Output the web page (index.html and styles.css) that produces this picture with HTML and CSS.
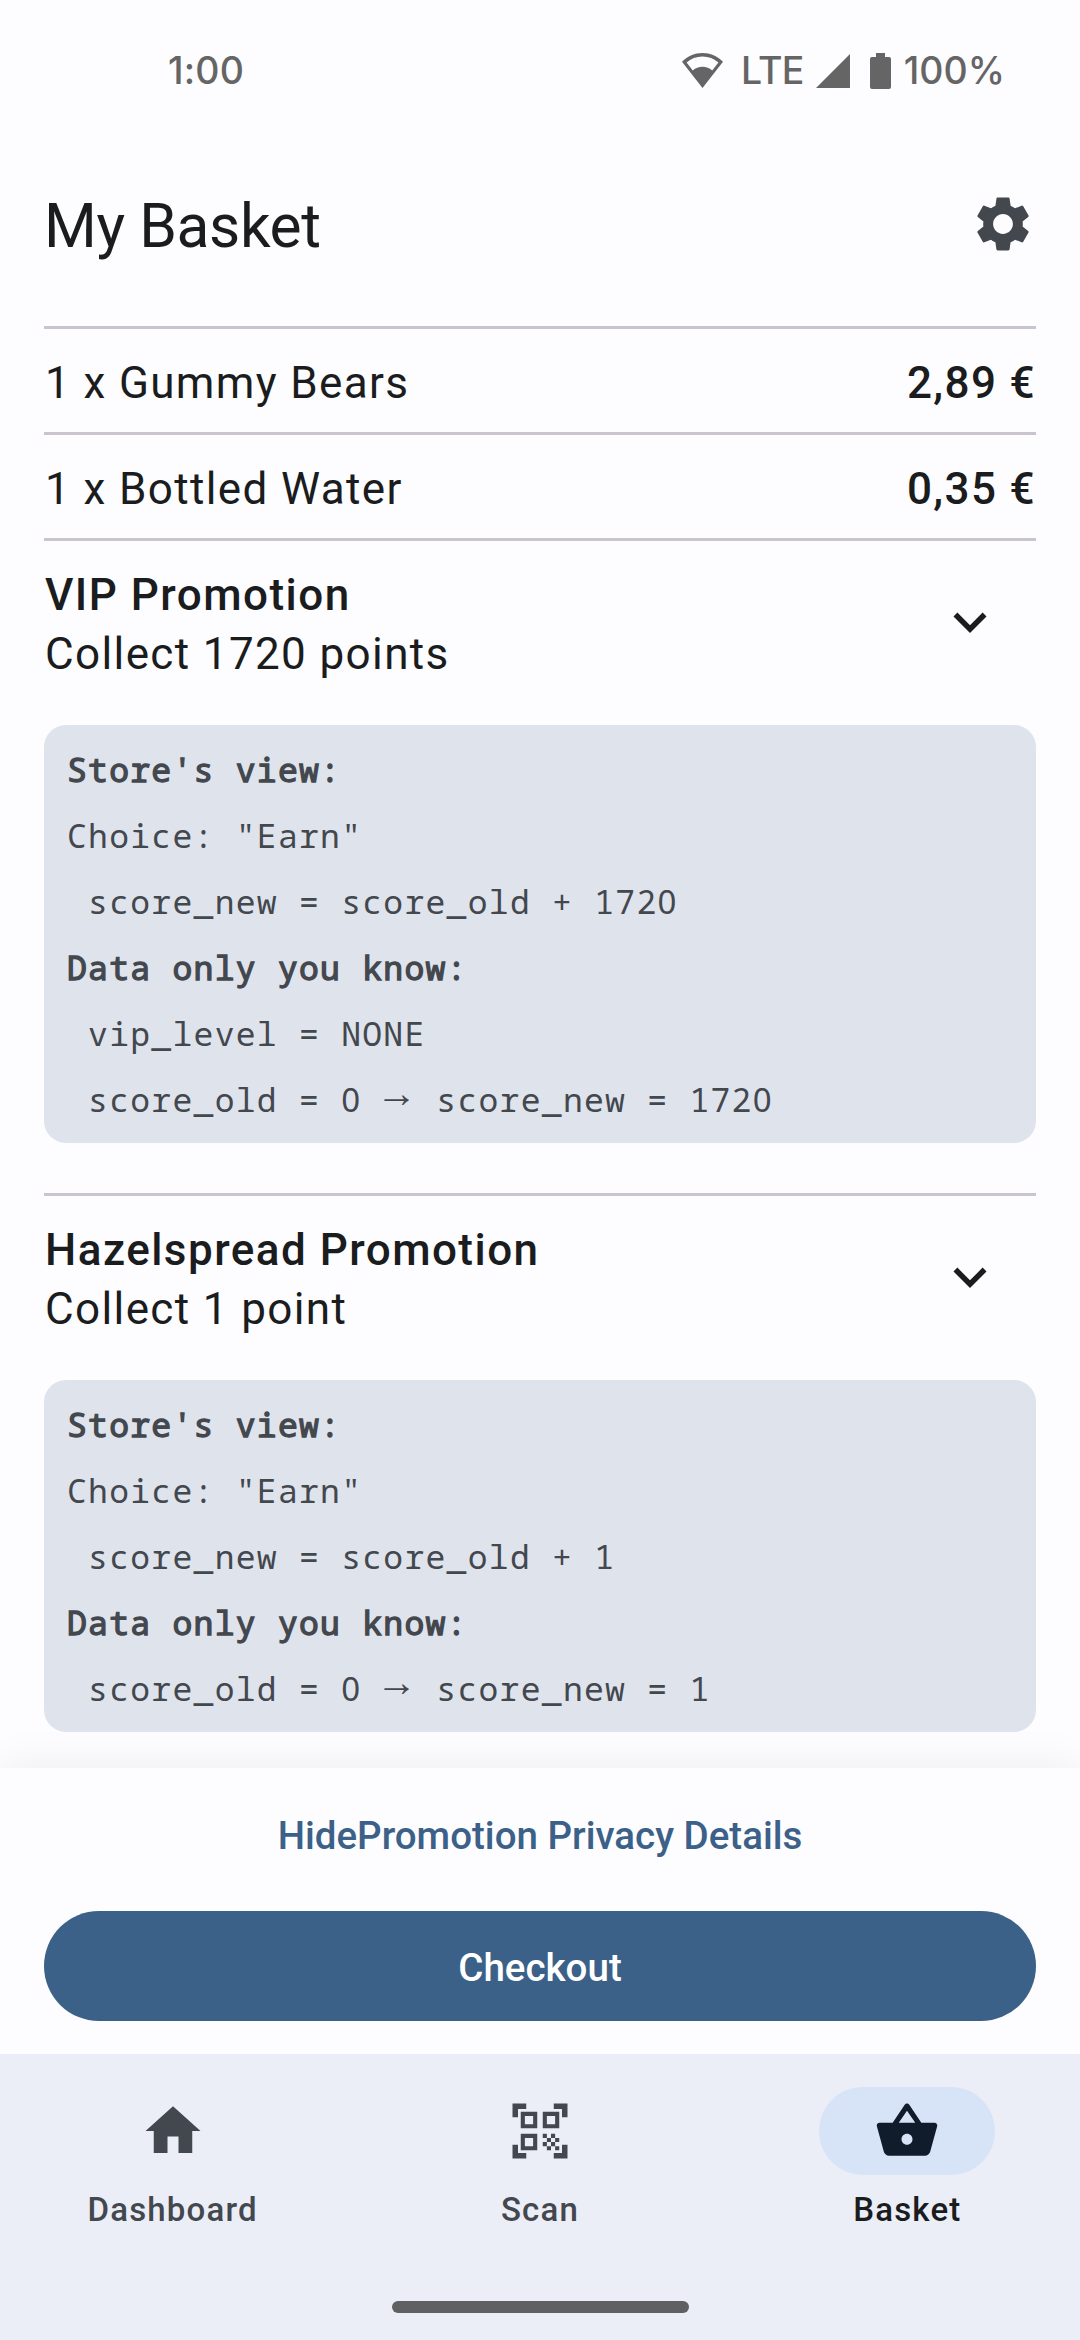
FILE: index.html
```html
<!DOCTYPE html>
<html lang="en">
<head>
<meta charset="utf-8">
<title>My Basket</title>
<link rel="stylesheet" href="styles.css">
</head>
<body>
<div class="screen">
  <div class="status-bar">
    <span class="clock">1:00</span>
    <div class="status-icons">
      <svg class="wifi" viewBox="0 0 41 35"><path fill-rule="evenodd" d="M20.500 0C12.700 0 5.600 3.200 0 8.700L20.500 35L41 8.700C35.400 3.200 28.300 0 20.500 0zM20.500 3.600C26.600 3.600 32.100 5.700 36.400 9.500L30.200 17.500C27.500 15.100 24.200 13.800 20.500 13.800S13.500 15.100 10.800 17.500L4.600 9.500C8.900 5.700 14.400 3.600 20.500 3.600z"/></svg>
      <span class="network">LTE</span>
      <svg class="signal" viewBox="0 0 34 34"><path d="M34 0V34H0z"/></svg>
      <svg class="battery" viewBox="0 0 21 36"><path d="M6 0H15V4H19A2 2 0 0 1 21 6V34A2 2 0 0 1 19 36H2A2 2 0 0 1 0 34V6A2 2 0 0 1 2 4H6z"/></svg>
      <span class="charge">100%</span>
    </div>
  </div>
  <header class="app-bar">
    <h1 class="title">My Basket</h1>
    <svg class="icon settings" viewBox="0 0 24 24"><path d="M19.14 12.94c.04-.3.06-.61.06-.94 0-.32-.02-.64-.07-.94l2.030-1.580c.18-.14.23-.41.12-.61l-1.920-3.320c-.12-.22-.37-.29-.59-.22l-2.390.96c-.5-.38-1.030-.7-1.620-.94l-.36-2.540c-.04-.24-.24-.41-.48-.41h-3.840c-.24 0-.43.17-.47.41l-.36 2.540c-.59.24-1.130.57-1.620.94l-2.390-.96c-.22-.08-.47 0-.59.22L2.740 8.870c-.12.21-.08.47.12.61l2.030 1.580c-.05.3-.09.63-.09.94s.02.64.07.94l-2.030 1.580c-.18.14-.23.41-.12.61l1.920 3.320c.12.22.37.29.59.22l2.390-.96c.5.38 1.030.7 1.620.94l.36 2.540c.05.24.24.41.48.41h3.840c.24 0 .44-.17.47-.41l.36-2.540c.59-.24 1.130-.56 1.620-.94l2.390.96c.22.08.47 0 .59-.22l1.920-3.320c.12-.22.07-.47-.12-.61l-2.010-1.580zM12 15.600c-1.980 0-3.600-1.620-3.600-3.600s1.620-3.600 3.600-3.600 3.600 1.620 3.600 3.600-1.620 3.600-3.600 3.600z"/></svg>
  </header>
  <main class="basket">
    <div class="item"><span>1 x Gummy Bears</span><span class="price">2,89 €</span></div>
    <div class="item"><span>1 x Bottled Water</span><span class="price">0,35 €</span></div>
    <section class="promo">
      <div class="promo-head">
        <div>
          <h2 class="promo-name">VIP Promotion</h2>
          <p class="promo-reward">Collect 1720 points</p>
        </div>
        <svg class="icon chevron" viewBox="0 0 24 24"><path d="M16.590 8.590L12 13.170 7.410 8.590 6 10l6 6 6-6z"/></svg>
      </div>
      <div class="details">
        <p class="strong">Store's view:</p>
        <p>Choice: "Earn"</p>
        <p> score_new = score_old + 172<span class="zero">0</span></p>
        <p class="strong">Data only you know:</p>
        <p> vip_level = NONE</p>
        <p> score_old = <span class="zero">0</span> <span class="arrow">→</span> score_new = 172<span class="zero">0</span></p>
      </div>
    </section>
    <section class="promo">
      <div class="promo-head">
        <div>
          <h2 class="promo-name">Hazelspread Promotion</h2>
          <p class="promo-reward">Collect 1 point</p>
        </div>
        <svg class="icon chevron" viewBox="0 0 24 24"><path d="M16.590 8.590L12 13.170 7.410 8.590 6 10l6 6 6-6z"/></svg>
      </div>
      <div class="details">
        <p class="strong">Store's view:</p>
        <p>Choice: "Earn"</p>
        <p> score_new = score_old + 1</p>
        <p class="strong">Data only you know:</p>
        <p> score_old = <span class="zero">0</span> <span class="arrow">→</span> score_new = 1</p>
      </div>
    </section>
  </main>
  <div class="actions">
    <button class="text-button">HidePromotion Privacy Details</button>
    <button class="checkout">Checkout</button>
  </div>
  <footer class="nav">
    <nav class="tabs">
      <a class="tab">
        <span class="pill"><svg class="icon" viewBox="0 0 24 24"><path d="M10 20v-6h4v6h5v-8h3L12 3 2 12h3v8z"/></svg></span>
        <span class="label">Dashboard</span>
      </a>
      <a class="tab">
        <span class="pill"><svg class="icon" viewBox="0 0 24 24"><path d="M9.500 6.500v3h-3v-3h3M11 5H5v6h6V5zM9.500 14.500v3h-3v-3h3M11 13H5v6h6v-6zM17.500 6.500v3h-3v-3h3M19 5h-6v6h6V5zM13 13h1.500v1.500H13V13zM14.500 14.500H16V16h-1.500v-1.500zM16 13h1.500v1.500H16V13zM13 16h1.500v1.500H13V16zM14.500 17.500H16V19h-1.500v-1.500zM16 16h1.500v1.500H16V16zM17.500 14.500H19V16h-1.500V14.500zM17.500 17.500H19V19h-1.500v-1.500zM22 7h-2V4h-3V2h5v5zM22 22v-5h-2v3h-3v2h5zM2 22h5v-2H4v-3H2v5zM2 2v5h2V4h3V2H2z" fill-rule="evenodd"/></svg></span>
        <span class="label">Scan</span>
      </a>
      <a class="tab active">
        <span class="pill"><svg class="icon" viewBox="0 0 24 24"><path d="M17.210 9l-4.380-6.560c-.19-.28-.51-.42-.83-.42s-.64.14-.83.43L6.790 9H2c-.55 0-1 .45-1 1 0 .09.01.18.04.27l2.540 9.270c.23.84 1 1.460 1.920 1.460h13c.92 0 1.690-.62 1.930-1.460l2.540-9.270L23 10c0-.55-.45-1-1-1h-4.790zM9 9l3-4.400L15 9H9zm3 8c-1.100 0-2-.9-2-2s.9-2 2-2 2 .9 2 2-.9 2-2 2z"/></svg></span>
        <span class="label">Basket</span>
      </a>
    </nav>
    <div class="handle"></div>
  </footer>
</div>
</body>
</html>
```
FILE: styles.css
```css
* {
  box-sizing: border-box;
  margin: 0;
  padding: 0;
}

body {
  background: #fdfcff;
  color: #1a1c1e;
  font-family: Roboto, sans-serif;
}

.screen {
  display: flex;
  flex-direction: column;
  width: 1080px;
  height: 2340px;
  overflow: hidden;
}

svg {
  display: block;
  fill: currentColor;
  flex: none;
}

.icon {
  width: 66px;
  height: 66px;
}

.status-bar {
  display: flex;
  justify-content: space-between;
  height: 136px;
  padding: 48px 75px 0 168px;
  color: #656565;
  font: 500 37.500px/46px Inter, sans-serif;
}

.clock {
  letter-spacing: 0.200px;
}

.status-icons {
  display: flex;
  align-items: flex-start;
}

.wifi {
  width: 41px;
  height: 35px;
  margin-top: 5px;
}

.network {
  margin-left: 18px;
  letter-spacing: -0.700px;
}

.signal {
  width: 34px;
  height: 34px;
  margin: 6px 0 0 12px;
}

.battery {
  width: 21px;
  height: 36px;
  margin: 5px 0 0 20px;
}

.charge {
  margin-left: 13px;
}

.app-bar {
  display: flex;
  align-items: center;
  justify-content: space-between;
  height: 176px;
  padding: 0 44px;
}

.title {
  font-size: 60.500px;
  font-weight: 400;
  line-height: 77px;
  letter-spacing: -0.400px;
  padding-top: 4px;
}

.settings {
  color: #43474e;
}

.basket {
  flex: 1;
  min-height: 0;
  margin-top: 14px;
  padding: 0 44px;
  font-size: 44px;
  letter-spacing: 1.375px;
}

.item {
  display: flex;
  justify-content: space-between;
  height: 106px;
  padding: 21px 0 0 1px;
  border-top: 3px solid #cac4d0;
  line-height: 66px;
}

.price {
  font-weight: 500;
}

.promo {
  border-top: 3px solid #cac4d0;
  padding-bottom: 50px;
}

.promo-head {
  display: flex;
  justify-content: space-between;
  height: 184px;
  padding: 25px 33px 0 1px;
  line-height: 59px;
}

.promo-name {
  font-size: 44px;
  font-weight: 500;
  letter-spacing: 1.470px;
}

.chevron {
  margin-top: 23px;
}

.details {
  padding: 12px 22px 10px 23px;
  border-radius: 22px;
  background: #dfe3eb;
  color: #43474e;
  font: 33px/66px "Noto Sans Mono", "DejaVu Sans Mono", monospace;
  letter-spacing: 1.290px;
}

.details p {
  height: 66px;
  white-space: pre;
}

.strong {
  -webkit-text-stroke: 1.300px currentColor;
}

.zero {
  font-family: "Noto Sans", sans-serif;
  letter-spacing: 2.200px;
}

/* Long thin arrow, centred on the lowercase letters */
.arrow {
  margin-left: -7px;
  font-family: "Liberation Sans", sans-serif;
  font-size: 41px;
  line-height: 1;
  letter-spacing: -2.100px;
  vertical-align: 5px;
}

.actions {
  position: relative;
  display: flex;
  flex-direction: column;
  height: 286px;
  padding: 11px 44px 0;
  background: #fdfcff;
  box-shadow: 0 0 44px rgba(0, 0, 0, 0.07);
}

button {
  border: 0;
  padding-top: 2px;
  font: 500 38.500px/55px Roboto, sans-serif;
}

.text-button {
  height: 110px;
  margin-bottom: 22px;
  background: none;
  color: #3b6188;
}

.checkout {
  height: 110px;
  border-radius: 55px;
  background: #3b6188;
  color: #fff;
}

.nav {
  position: relative;
  display: flex;
  flex-direction: column;
  align-items: center;
  height: 286px;
  background: #ebeef6;
}

.tabs {
  display: grid;
  grid-template-columns: repeat(3, 1fr);
  gap: 22px;
  width: 100%;
  height: 247px;
  padding-top: 33px;
}

.tab {
  display: flex;
  flex-direction: column;
  align-items: center;
  color: #43474e;
}

.pill {
  display: grid;
  place-items: center;
  width: 176px;
  height: 88px;
  border-radius: 44px;
}

.label {
  margin-top: 13px;
  font-size: 33px;
  font-weight: 500;
  line-height: 44px;
  letter-spacing: 1.200px;
}

.active .pill {
  background: #d7e3f7;
  color: #101c2b;
}

.active .label {
  color: #1a1c1e;
}

.handle {
  width: 297px;
  height: 12px;
  border-radius: 6px;
  background: #5f6062;
}
```
